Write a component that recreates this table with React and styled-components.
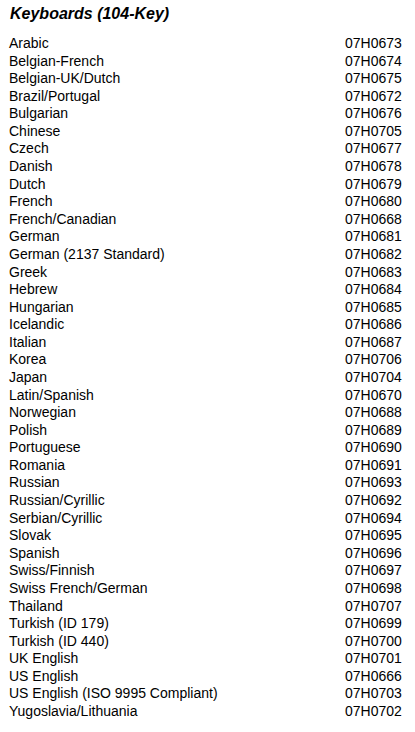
import React from "react";
import styled, { createGlobalStyle } from "styled-components";

const Global = createGlobalStyle`
  html, body { margin: 0; padding: 0; background: #fff; }
  body { font-family: "Liberation Sans", Arial, sans-serif; color: #000; }
`;

const Page = styled.div`
  width: 415px;
  padding: 4px 0 0 9px;
  box-sizing: border-box;
`;

const Title = styled.h1`
  margin: 0 0 11px 1px;
  font-size: 16px;
  line-height: 20px;
  font-weight: bold;
  font-style: italic;
`;

const List = styled.div`
  display: grid;
  grid-template-columns: 336px auto;
  grid-auto-rows: 17.58px;
  font-size: 14px;
  line-height: 17.58px;
`;

const Cell = styled.div`
  white-space: nowrap;
`;

const rows = [
  ["Arabic", "07H0673"],
  ["Belgian-French", "07H0674"],
  ["Belgian-UK/Dutch", "07H0675"],
  ["Brazil/Portugal", "07H0672"],
  ["Bulgarian", "07H0676"],
  ["Chinese", "07H0705"],
  ["Czech", "07H0677"],
  ["Danish", "07H0678"],
  ["Dutch", "07H0679"],
  ["French", "07H0680"],
  ["French/Canadian", "07H0668"],
  ["German", "07H0681"],
  ["German (2137 Standard)", "07H0682"],
  ["Greek", "07H0683"],
  ["Hebrew", "07H0684"],
  ["Hungarian", "07H0685"],
  ["Icelandic", "07H0686"],
  ["Italian", "07H0687"],
  ["Korea", "07H0706"],
  ["Japan", "07H0704"],
  ["Latin/Spanish", "07H0670"],
  ["Norwegian", "07H0688"],
  ["Polish", "07H0689"],
  ["Portuguese", "07H0690"],
  ["Romania", "07H0691"],
  ["Russian", "07H0693"],
  ["Russian/Cyrillic", "07H0692"],
  ["Serbian/Cyrillic", "07H0694"],
  ["Slovak", "07H0695"],
  ["Spanish", "07H0696"],
  ["Swiss/Finnish", "07H0697"],
  ["Swiss French/German", "07H0698"],
  ["Thailand", "07H0707"],
  ["Turkish (ID 179)", "07H0699"],
  ["Turkish (ID 440)", "07H0700"],
  ["UK English", "07H0701"],
  ["US English", "07H0666"],
  ["US English (ISO 9995 Compliant)", "07H0703"],
  ["Yugoslavia/Lithuania", "07H0702"],
];

export default function App() {
  return (
    <Page>
      <Global />
      <Title>Keyboards (104-Key)</Title>
      <List>
        {rows.map(([name, code]) => (
          <React.Fragment key={name}>
            <Cell>{name}</Cell>
            <Cell>{code}</Cell>
          </React.Fragment>
        ))}
      </List>
    </Page>
  );
}
